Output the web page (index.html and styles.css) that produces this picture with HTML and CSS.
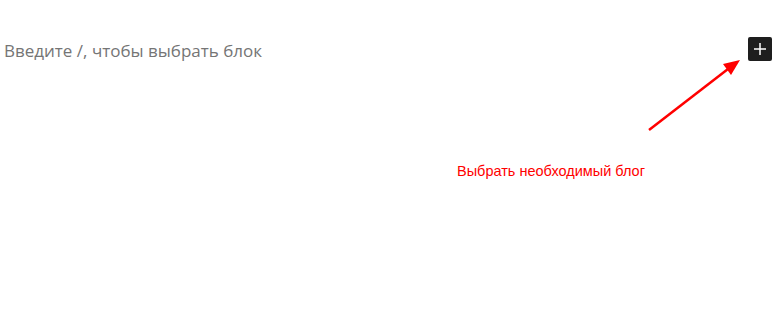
FILE: index.html
```html
<!DOCTYPE html>
<html lang="ru">
<head>
<meta charset="utf-8">
<link rel="stylesheet" href="styles.css">
</head>
<body>
<div class="canvas">
  <div class="block-row">
    <p class="placeholder">Введите /, чтобы выбрать блок</p>
    <button class="inserter" aria-label="Добавить блок">
      <svg width="24" height="24" viewBox="0 0 24 24"><path d="M12 6v12M6 12h12" stroke="#fff" stroke-width="1.5" fill="none"/></svg>
    </button>
  </div>
  <svg class="arrow" width="784" height="313" viewBox="0 0 784 313">
    <line x1="649" y1="130" x2="728" y2="69" stroke="#ff0000" stroke-width="2.5"/>
    <polygon points="740,60 723,64 731,75" fill="#ff0000"/>
  </svg>
  <span class="note">Выбрать необходимый блог</span>
</div>
</body>
</html>
```
FILE: styles.css
```css
html, body { margin: 0; padding: 0; background: #fff; }
.canvas { position: relative; width: 784px; height: 313px; overflow: hidden; }
.block-row {
  display: flex;
  align-items: center;
  justify-content: space-between;
  padding: 34px 12px 0 4px;
}
.placeholder {
  margin: 0;
  font-family: "Open Sans", sans-serif;
  font-size: 17px;
  color: #757575;
  line-height: 24px;
  padding-top: 5px;
}
.inserter {
  width: 24px; height: 24px;
  padding: 0; border: 0;
  background: #1e1e1e;
  border-radius: 2px;
  display: flex; align-items: center; justify-content: center;
}
.arrow { position: absolute; left: 0; top: 0; pointer-events: none; }
.note {
  position: absolute;
  left: 457px; top: 162px;
  font-family: "Liberation Sans", Arial, sans-serif;
  font-size: 14.5px;
  color: #ff0000;
  line-height: 18px;
}
```
